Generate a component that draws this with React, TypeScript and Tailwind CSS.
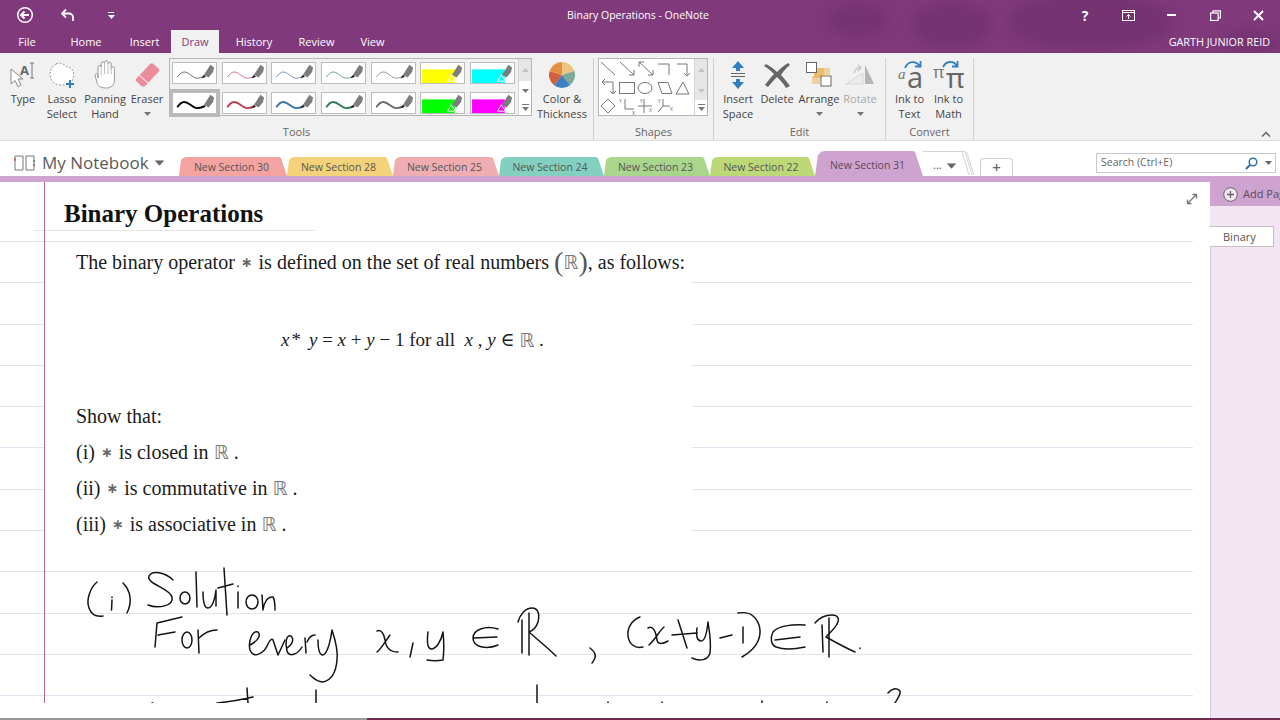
import React from "react";

const uiFont = "font-['Open_Sans','Noto_Sans',sans-serif]";
const serif = "font-['Liberation_Serif','DejaVu_Serif',serif]";

const sectionTabs = [
  { name: "New Section 30", color: "bg-[#f4a3a3]", w: "w-[108px]" },
  { name: "New Section 28", color: "bg-[#f3d27a]", w: "w-[106px]" },
  { name: "New Section 25", color: "bg-[#efadb1]", w: "w-[106px]" },
  { name: "New Section 24", color: "bg-[#84d0c0]", w: "w-[105px]" },
  { name: "New Section 23", color: "bg-[#a9d58c]", w: "w-[106px]" },
  { name: "New Section 22", color: "bg-[#bdd977]", w: "w-[105px]" },
];

const penColors = ["#2d2d2d", "#c23a50", "#3b70a8", "#2f7d52", "#6a6a6a"];
const markers = [
  ["#ffff00", "#00ffff"],
  ["#00ff00", "#ff00ff"],
];

function Caret({ className = "" }: { className?: string }) {
  return (
    <svg width="7" height="4" viewBox="0 0 7 4" className={className}>
      <path d="M0 0h7L3.5 4z" fill="currentColor" />
    </svg>
  );
}

function PenTip({ marker }: { marker?: string }) {
  return (
    <>
      <path d="M33 13l7-11 4 3-1 5-5 6z" fill="#7d7d7d" />
      {marker ? <path d="M28 20l4-7 5 7z" fill={marker} stroke="#fff" strokeWidth="1" /> : <path d="M30 17l3-4 2 2z" fill="#111" />}
    </>
  );
}

function Pen({ color, thick, selected }: { color: string; thick?: boolean; selected?: boolean }) {
  return (
    <div className={`h-[22px] w-[45px] border border-[#bdbdbd] bg-white ${selected ? "ring-[3px] ring-[#b9b9b9]" : ""}`}>
      <svg width="43" height="20" viewBox="0 0 45 22">
        <path
          d="M4 15C9 8 13 9 18 13S26 18 32 15"
          fill="none"
          stroke={color}
          strokeWidth={thick ? 2 : 1}
          strokeLinecap="round"
          opacity={thick ? 1 : 0.75}
        />
        <PenTip />
      </svg>
    </div>
  );
}

function Marker({ color }: { color: string }) {
  return (
    <div className="h-[22px] w-[45px] border border-[#bdbdbd] bg-white">
      <svg width="43" height="20" viewBox="0 0 45 22">
        <rect x="0" y="7" width="36" height="15" fill={color} />
        <PenTip marker={color} />
      </svg>
    </div>
  );
}

function GalleryScroll({ downDisabled }: { downDisabled?: boolean }) {
  return (
    <div className="flex w-[13px] flex-col border-l border-[#d5d5d5] text-[#777]">
      <div className="flex h-[22px] items-center justify-center bg-[#e6e6e6] text-[#c4c4c4]">
        <Caret className="rotate-180" />
      </div>
      <div className={`flex h-[19px] items-center justify-center ${downDisabled ? "bg-[#e6e6e6] text-[#c4c4c4]" : "bg-white"}`}>
        <Caret />
      </div>
      <div className="flex flex-1 flex-col items-center justify-center gap-[2px] bg-white">
        <div className="h-px w-[7px] bg-[#777]" />
        <Caret />
      </div>
    </div>
  );
}

function BigButton({
  w,
  icon,
  lines,
  caret,
  muted,
}: {
  w: string;
  icon: React.ReactNode;
  lines: string[];
  caret?: boolean;
  muted?: boolean;
}) {
  return (
    <div className={`${w} flex shrink-0 flex-col items-center ${muted ? "text-[#a8a8a8]" : "text-[#444]"}`}>
      <div className="flex h-[33px] items-center justify-center">{icon}</div>
      {lines.map((l) => (
        <div key={l} className="h-[15px] whitespace-nowrap text-[11px] leading-[15px]">
          {l}
        </div>
      ))}
      {caret && (
        <div className="flex h-[15px] items-center text-[#777]">
          <Caret />
        </div>
      )}
    </div>
  );
}

function Group({ w, label, children }: { w: string; label: string; children: React.ReactNode }) {
  return (
    <div className={`${w} flex h-[82px] shrink-0 flex-col border-r border-[#d0d0d0]`}>
      <div className="flex h-[66px] items-start">{children}</div>
      <div className="text-center text-[11px] leading-[15px] text-[#666]">{label}</div>
    </div>
  );
}

function Ink() {
  return (
    <svg
      className="absolute left-0 top-0"
      width="1193"
      height="521"
      viewBox="0 182 1193 521"
      fill="none"
      stroke="#141414"
      strokeWidth="1.5"
      strokeLinecap="round"
      strokeLinejoin="round"
    >
      {/* (i) Solution */}
      <path d="M97 582C90 588 86 600 89 608C91 614 96 617 103 616" />
      <path d="M112 600L111.500 610M112 597V597.500" />
      <path d="M123 583C130 590 133 601 127 613" />
      <path d="M173 580C165 572 152 570 149 576C146 584 170 588 172 597C174 606 158 609 148 605" />
      <ellipse cx="185" cy="598" rx="5" ry="6" />
      <path d="M196 572L197 607" />
      <path d="M203 592C203 602 204 608 208 608C212 608 215 600 216 590L216 606" />
      <path d="M224 568L227 615M218 588L233 584" />
      <path d="M238 592V608M238 586V586.500" />
      <ellipse cx="252" cy="602" rx="6" ry="7" />
      <path d="M262 595L263 610C264 602 268 596 273 597C275 600 275 606 275 610" />
      {/* For every x, y */}
      <path d="M157 623L155 647M157 623L182 617M158 635L175 632" />
      <ellipse cx="187" cy="640" rx="5" ry="8" />
      <path d="M198 630L199 653M199 638C204 633 210 630 217 630" />
      <path d="M250 645C256 642 262 636 258 632C252 630 248 642 250 650C253 659 264 654 268 644C270 640 272 638 273 640L278 655L285 640" />
      <path d="M287 648C291 646 295 640 291 636C286 634 285 644 287 651C289 658 298 654 302 647" />
      <path d="M305 638L306 653M307 642C309 637 312 635 315 635" />
      <path d="M318 640C318 648 319 654 322 655C326 656 330 645 332 630C336 642 338 652 337 660C336 672 332 680 323 682C318 682 314 679 310 675" />
      <path d="M377 631C382 629 384 635 385 640C386 648 390 652 398 652M390 635C386 640 382 648 377 652" />
      <path d="M413 643L410 657" />
      <path d="M428 632C427 640 427 648 431 649C436 649 441 642 443 632C444 642 444 652 443 660C438 661 432 661 427 660" />
      <path d="M498 629C485 625 473 630 473 638C473 647 486 650 498 645M474 638L497 637" />
      <path d="M522 620L522 653M529 613L529 655M518 622C520 614 526 608 532 608C538 608 540 614 538 622C536 628 532 631 529 632C538 640 548 648 556 656" />
      <path d="M590 648C594 651 596 655 595 658C594 660 593 662 592 663" />
      {/* (x+y-1) in R */}
      <path d="M640 617C632 620 627 628 628 636C629 644 635 649 643 647" />
      <path d="M648 628C653 625 656 632 657 640C658 645 663 644 668 641M664 627C660 630 655 640 649 645" />
      <path d="M678 620L687 648M672 635L697 633" />
      <path d="M697 628C696 636 697 641 701 641C705 641 707 632 708 622C710 634 711 646 710 653C708 660 700 662 692 658" />
      <path d="M720 638L732 635" />
      <path d="M743 627V643M738 613C745 612 750 613 753 616C760 622 762 632 758 641C755 648 749 653 742 657" />
      <path d="M805 625C792 624 778 626 773 632C770 638 771 645 776 647C784 650 796 649 805 647M775 640L800 637" />
      <path d="M822 625L823 652M829 618L829 657M815 623C820 617 826 615 832 615C838 615 840 619 837 624C834 630 828 634 826 637C835 642 846 648 855 652" />
      <path d="M860 648V648.500" />
      {/* next line, cut off at the bottom of the window */}
      <path d="M152 703H153M217 703C228 702 240 700 253 697M247 688L248 703M316 690V703M537 685V703" />
      <path d="M608 702V703M662 702V703M762 701V703M827 702V703M888 693C891 689 897 687 900 691C901 695 897 699 895 703" />
    </svg>
  );
}

function Star() {
  return <span className="mx-[6px] font-['DejaVu_Sans',serif] text-[14px] font-bold text-[#666]">∗</span>;
}

function Reals() {
  return <span className="font-['DejaVu_Sans',serif] text-[19px] text-[#777]">ℝ</span>;
}

export default function App() {
  return (
    <div className={`${uiFont} flex h-[720px] w-[1280px] flex-col overflow-hidden bg-white`}>
      {/* Title bar and tabs */}
      <div className="relative h-[53px] shrink-0 overflow-hidden bg-[#80397b] text-white">
        <svg className="absolute right-0 top-0" width="480" height="53" viewBox="0 0 480 53">
          <defs>
            <filter id="soft">
              <feGaussianBlur stdDeviation="6" />
            </filter>
          </defs>
          <g fill="#6d2f6c" filter="url(#soft)" opacity="0.6">
            <ellipse cx="58" cy="20" rx="30" ry="16" />
            <ellipse cx="152" cy="25" rx="40" ry="22" />
            <ellipse cx="290" cy="22" rx="82" ry="28" />
            <ellipse cx="450" cy="42" rx="30" ry="10" />
          </g>
        </svg>
        <div className="relative flex h-[30px] items-center">
          <div className="flex w-[50px] justify-center">
            <svg width="18" height="18" viewBox="0 0 18 18" fill="none" stroke="white" strokeWidth="1.500">
              <circle cx="9" cy="9" r="7.300" />
              <path d="M13 9H5.500M8.500 5.500L5 9l3.500 3.500" strokeWidth="2" />
            </svg>
          </div>
          <div className="ml-[8px] flex w-[20px] justify-center">
            <svg width="16" height="15" viewBox="0 0 16 15" fill="none" stroke="white" strokeWidth="1.800">
              <path d="M6 1.500L2 5.500l4 4M2.500 5.500H9a4 4 0 0 1 4 4V13" />
            </svg>
          </div>
          <div className="ml-[28px] flex w-[10px] flex-col items-center gap-[2px]">
            <div className="h-px w-[6px] bg-white" />
            <Caret className="text-white" />
          </div>
          <div className="ml-[447px] w-[150px] whitespace-nowrap pt-[2px] text-center text-[10.500px]">Binary Operations - OneNote</div>
          <div className="ml-[364px] flex w-[16px] justify-center text-[14px] font-bold">?</div>
          <div className="ml-[27px] flex w-[16px] justify-center">
            <svg width="13" height="11" viewBox="0 0 13 11" fill="none" stroke="white">
              <rect x="0.500" y="0.500" width="12" height="10" />
              <path d="M0.500 2.500H12.500M6.500 9V4.500M4.500 6.500l2-2 2 2" />
            </svg>
          </div>
          <div className="ml-[27px] flex w-[16px] justify-center">
            <div className="h-[2px] w-[9px] bg-white" />
          </div>
          <div className="ml-[28px] flex w-[16px] justify-center">
            <svg width="11" height="11" viewBox="0 0 11 11" fill="none" stroke="white" strokeWidth="1.200">
              <rect x="0.600" y="3" width="7.500" height="7.500" />
              <path d="M3 3V0.800H10.400V8H8" />
            </svg>
          </div>
          <div className="ml-[27px] flex w-[16px] justify-center">
            <svg width="11" height="11" viewBox="0 0 11 11" stroke="white" strokeWidth="2">
              <path d="M1 1l9 9M10 1l-9 9" />
            </svg>
          </div>
        </div>
        <div className="relative flex h-[23px] items-stretch text-[11px] leading-[23px]">
          <div className="w-[54px] text-center">File</div>
          <div className="w-[64px] text-center">Home</div>
          <div className="w-[53px] text-center">Insert</div>
          <div className="w-[48px] bg-[#f1f1f1] text-center text-[#80397b]">Draw</div>
          <div className="w-[70px] text-center">History</div>
          <div className="w-[55px] text-center">Review</div>
          <div className="w-[57px] text-center">View</div>
          <div className="ml-auto pr-[10px] text-[10.800px]">GARTH JUNIOR REID</div>
        </div>
      </div>

      {/* Ribbon */}
      <div className="flex h-[88px] shrink-0 items-start border-b border-[#dcdcdc] bg-[#f1f1f1] pt-[5px]">
        <Group w="w-[594px]" label="Tools">
          <div className="w-[4px] shrink-0" />
          <BigButton
            w="w-[38px]"
            lines={["Type"]}
            icon={
              <svg width="28" height="28" viewBox="0 0 28 28">
                <path d="M2 8v15l4-3.500 3 6 3-1.500-3-6h5z" fill="#fff" stroke="#888" />
                <text x="11" y="14" fontSize="13" fontWeight="700" fill="#666" fontFamily="Open Sans">A</text>
                <path d="M21 2h4M23 2v15M21 17h4" stroke="#777" fill="none" />
              </svg>
            }
          />
          <BigButton
            w="w-[40px]"
            lines={["Lasso", "Select"]}
            icon={
              <svg width="28" height="28" viewBox="0 0 28 28" fill="none">
                <path d="M8 3C14 0 17 5 20 6C26 7 27 14 24 20C20 25 10 25 6 22C0 17 1 7 8 3Z" fill="#fff" stroke="#999" strokeDasharray="2 1.500" />
                <path d="M22 19v8M18 23h8" stroke="#2f7fc1" strokeWidth="2" />
              </svg>
            }
          />
          <BigButton
            w="w-[46px]"
            lines={["Panning", "Hand"]}
            icon={
              <svg width="24" height="30" viewBox="0 0 24 30">
                <path
                  d="M5 18V7a1.600 1.600 0 0 1 3.200 0V3.500a1.700 1.700 0 0 1 3.400 0V2.500a1.700 1.700 0 0 1 3.400 0V4a1.600 1.600 0 0 1 3.200 0v4.500a1.600 1.600 0 0 1 3.200 0V20c0 5-3 8-8 8-6 0-9-2-9.500-6L2 15c0-2 3-1.500 3 1z"
                  fill="#fff"
                  stroke="#999"
                />
                <path d="M8.200 7v8M11.600 3.500V14M15 3v11M18.200 5v9" stroke="#bbb" fill="none" />
              </svg>
            }
          />
          <BigButton
            w="w-[38px]"
            lines={["Eraser"]}
            caret
            icon={
              <svg width="28" height="28" viewBox="0 0 28 28">
                <path d="M3 18L17 3c1-1 2.500-1 3.500 0l5 4.500c1 1 1 2.500 0 3.500L12 25c-1 1-2.500 1-3.500 0l-5-4.500c-1-.7-1-1.700-.5-2.500z" fill="#ea8c9a" />
                <path d="M6.500 14.500l9 8" stroke="#fff" strokeWidth="1" />
              </svg>
            }
          />
          <div className="ml-[3px] flex h-[58px] w-[363px] shrink-0 border border-[#b5b5b5]">
            <div className="grid w-[349px] grid-cols-[repeat(7,45px)] gap-x-[4.700px] gap-y-[7px] px-[2px] pt-[3px]">
              {penColors.map((c) => (
                <Pen key={c} color={c} />
              ))}
              <Marker color={markers[0][0]} />
              <Marker color={markers[0][1]} />
              {penColors.map((c, i) => (
                <Pen key={c} color={i === 0 ? "#000" : c} thick selected={i === 0} />
              ))}
              <Marker color={markers[1][0]} />
              <Marker color={markers[1][1]} />
            </div>
            <GalleryScroll />
          </div>
          <BigButton
            w="w-[60px]"
            lines={["Color &", "Thickness"]}
            icon={
              <svg width="28" height="28" viewBox="0 0 28 28">
                <path d="M14 14L14 1A13 13 0 0 1 26.400 10z" fill="#edc57f" />
                <path d="M14 14L26.400 10A13 13 0 0 1 22 24.300z" fill="#7ea997" />
                <path d="M14 14L22 24.300A13 13 0 0 1 6 24.300z" fill="#3f7fc1" />
                <path d="M14 14L6 24.300A13 13 0 0 1 1.600 10z" fill="#d2603d" />
                <path d="M14 14L1.600 10A13 13 0 0 1 14 1z" fill="#e58f45" />
              </svg>
            }
          />
        </Group>

        <Group w="w-[120px]" label="Shapes">
          <div className="ml-[4px] flex h-[58px] w-[110px] shrink-0 border border-[#b5b5b5] bg-white">
            <svg width="95" height="56" viewBox="0 0 95 56" fill="none" stroke="#777" className="shrink-0">
              <path d="M2 3L16 16" />
              <path d="M21 3L35 16M35 11V16H30" />
              <path d="M40 3L54 16M40 8V3H45M54 11V16H49" />
              <path d="M59 5H70V16" />
              <path d="M78 5H88V17M85 14L88 17L91 14" />
              <path d="M14 23H3M6 20L3 23L6 26M14 23V35M11 32L14 35L17 32" />
              <rect x="20.500" y="23.500" width="15" height="11" />
              <ellipse cx="46" cy="29" rx="7" ry="5.500" />
              <path d="M59 23.500H69L73 34.500H63Z" />
              <path d="M84 23L90 35H77Z" />
              <path d="M9 40L16 47L9 54L2 47Z" />
              <path d="M26 40V50H35" />
              <path d="M39 47H53M45 40V54" />
              <path d="M64 40V47L59 53M64 47H71" />
              <text x="20" y="44" fontSize="5" fill="#666" stroke="none">Y</text>
              <text x="33" y="56" fontSize="5" fill="#666" stroke="none">X</text>
              <text x="41" y="44" fontSize="5" fill="#666" stroke="none">Y</text>
              <text x="50" y="53" fontSize="5" fill="#666" stroke="none">X</text>
              <text x="59" y="44" fontSize="5" fill="#666" stroke="none">Y</text>
              <text x="71" y="52" fontSize="5" fill="#666" stroke="none">X</text>
            </svg>
            <GalleryScroll downDisabled />
          </div>
        </Group>

        <Group w="w-[172px]" label="Edit">
          <div className="w-[3px] shrink-0" />
          <BigButton
            w="w-[42px]"
            lines={["Insert", "Space"]}
            icon={
              <svg width="18" height="30" viewBox="0 0 18 30">
                <path d="M9 1l6 7h-4v3H7V8H3zM9 29l6-7h-4v-3H7v3H3z" fill="#2f7fc1" />
                <path d="M2 13.500H16M2 16.500H16" stroke="#666" />
              </svg>
            }
          />
          <BigButton
            w="w-[36px]"
            lines={["Delete"]}
            icon={
              <svg width="28" height="26" viewBox="0 0 28 26">
                <path d="M3 2c6 3 10 7 11 8 3-3 6-6 11-9l2 2c-5 4-7 7-9 10 3 3 6 7 9 11l-4 2c-3-5-6-8-9-11-3 3-6 6-9 10l-3-2c3-4 6-8 9-11C8 9 5 6 1 4z" fill="#666" />
              </svg>
            }
          />
          <BigButton
            w="w-[48px]"
            lines={["Arrange"]}
            caret
            icon={
              <svg width="28" height="28" viewBox="0 0 28 28">
                <rect x="9" y="7" width="10" height="10" fill="#edbd6b" />
                <rect x="1.500" y="1.500" width="10" height="10" fill="#fff" stroke="#666" />
                <rect x="16" y="15" width="10" height="10" fill="#fff" stroke="#666" />
                <rect x="17" y="7" width="8" height="8" fill="#edbd6b" opacity="0.6" />
                <rect x="7" y="15" width="8" height="8" fill="#edbd6b" opacity="0.6" />
              </svg>
            }
          />
          <BigButton
            w="w-[34px]"
            lines={["Rotate"]}
            caret
            muted
            icon={
              <svg width="30" height="24" viewBox="0 0 30 24" fill="none">
                <path d="M1 21L18 10V21Z" stroke="#d5d5d5" fill="#ececec" />
                <path d="M20 2L29 21H20Z" fill="#b5b5b5" />
                <path d="M9 10c1-4 4-6 7-5M13 2l3 3-3 3" stroke="#c8c8c8" strokeWidth="1.500" />
              </svg>
            }
          />
        </Group>

        <Group w="w-[88px]" label="Convert">
          <div className="w-[4px] shrink-0" />
          <BigButton
            w="w-[39px]"
            lines={["Ink to", "Text"]}
            icon={
              <svg width="34" height="33" viewBox="0 0 34 33" className="overflow-visible">
                <path d="M12 10C15 3 22 2 27 8M27.500 3V8.500H22" fill="none" stroke="#2f7fc1" strokeWidth="1.800" />
                <text x="5" y="21" fontSize="15" fontStyle="italic" fill="#777" fontFamily="Liberation Serif">a</text>
                <text x="14" y="30" fontSize="29" fill="#666" fontFamily="Open Sans">a</text>
              </svg>
            }
          />
          <BigButton
            w="w-[39px]"
            lines={["Ink to", "Math"]}
            icon={
              <svg width="34" height="33" viewBox="0 0 34 33" className="overflow-visible">
                <path d="M11 9C14 3 21 2 25 8M25.500 3V8.500H20" fill="none" stroke="#2f7fc1" strokeWidth="1.800" />
                <text x="1" y="20" fontSize="17" fill="#777" fontFamily="Noto Sans">π</text>
                <text x="14" y="30" fontSize="28" fill="#666" fontFamily="Noto Sans">π</text>
              </svg>
            }
          />
        </Group>
        <div className="flex h-[82px] flex-1 items-end justify-end pb-[3px] pr-[9px]">
          <svg width="10" height="6" viewBox="0 0 10 6" fill="none" stroke="#666" strokeWidth="1.500">
            <path d="M1 5.500L5 1.500l4 4" />
          </svg>
        </div>
      </div>

      {/* Notebook and section tabs */}
      <div className="flex h-[35px] shrink-0 items-end bg-white">
        <div className="flex h-[35px] w-[179px] shrink-0 items-center pl-[14px] pt-[8px] text-[#5a5a5a]">
          <svg width="21" height="18" viewBox="0 0 21 18" fill="none" stroke="#777" className="shrink-0">
            <path d="M1 2H9V16H1ZM12 2H20V16H12Z" />
            <path d="M1 4V7" stroke="#d0583a" strokeWidth="1.500" />
            <path d="M20 6V8M20 10V12" stroke="#444" />
          </svg>
          <span className="ml-[7px] whitespace-nowrap text-[17px] leading-none">My Notebook</span>
          <Caret className="ml-[7px] scale-[1.400] text-[#666]" />
        </div>
        {sectionTabs.map((t) => (
          <div
            key={t.name}
            className={`${t.w} ${t.color} h-[19px] shrink-0 pr-[3px] text-center text-[10.500px] leading-[20px] text-[#555] [clip-path:polygon(0_100%,2px_3px,4px_1px,7px_0,calc(100%-8px)_0,calc(100%-6px)_1px,100%_100%)]`}
          >
            {t.name}
          </div>
        ))}
        <div className="h-[25px] w-[108px] shrink-0 pr-[3px] bg-[#cfa3d0] text-center text-[10.500px] leading-[29px] text-[#5a4a5a] [clip-path:polygon(0_100%,3px_4px,6px_1px,9px_0,calc(100%-10px)_0,calc(100%-8px)_1px,100%_100%)]">
          New Section 31
        </div>
        <div className="relative flex h-[25px] w-[57px] shrink-0 items-end gap-[6px] pb-[6px] pl-[10px] text-[11px] leading-none text-[#555]">
          <svg className="absolute left-[-8px] top-0" width="65" height="25" viewBox="0 0 65 25" fill="none" stroke="#d4d4d4">
            <path d="M8 0.500H47L54 24M47 0.500H50L57 24M50 1.500H52L59 24" />
          </svg>
          <span>...</span>
          <Caret className="mb-[2px] scale-[1.400] text-[#666]" />
        </div>
        <div className="flex h-[18px] w-[33px] shrink-0 items-center justify-center rounded-t-[4px] border-x border-t border-[#cfcfcf] text-[15px] font-semibold leading-none text-[#666]">
          +
        </div>
        <div className="mb-[3px] ml-[83px] flex h-[20px] w-[180px] shrink-0 items-center border border-[#c9c9c9] pl-[4px] text-[10.500px] text-[#666]">
          <span>Search (Ctrl+E)</span>
          <svg width="13" height="13" viewBox="0 0 13 13" fill="none" stroke="#2f6fa8" strokeWidth="1.500" className="ml-auto">
            <circle cx="8" cy="5" r="3.800" />
            <path d="M5 8L1 12" strokeWidth="2" />
          </svg>
          <Caret className="ml-[7px] mr-[3px] text-[#666]" />
        </div>
      </div>

      <div className="h-[6px] shrink-0 bg-[#cfa3d0]" />

      {/* Page + page list */}
      <div className="flex min-h-0 flex-1">
        <div className="relative w-[1210px] shrink-0 overflow-hidden bg-white">
          <div className="h-[59px] pl-[64px]">
            <div className={`${serif} pt-[17px] text-[25px] font-bold leading-[30px] text-[#111]`}>Binary Operations</div>
            <div className="-ml-[30px] mt-[1px] h-px w-[281px] bg-[#e6e6e6]" />
          </div>
          <div className="h-[462px] w-[1193px] bg-[repeating-linear-gradient(to_bottom,#dde6ee_0,#dde6ee_1px,transparent_1px,transparent_41.300px)] pt-[2px]">
            <div className={`${serif} ml-[45px] h-[302px] w-[647px] bg-white pl-[31px] pt-[1px] text-[20px] leading-[26px] text-[#1c1c1c]`}>
              <div className="flex h-[36px] items-center whitespace-nowrap">
                The binary operator
                <Star />
                is defined on the set of real numbers&nbsp;
                <span className="text-[28px] font-light leading-none text-[#555]">(</span>
                <Reals />
                <span className="text-[28px] font-light leading-none text-[#555]">)</span>, as follows:
              </div>
              <div className="mt-[42px] flex h-[36px] items-center whitespace-nowrap pl-[205px] text-[19px]">
                <i>x</i>
                <span className="ml-[2px] mr-[8px]">*</span>
                <i>y</i>&nbsp;=&nbsp;<i>x</i>&nbsp;+&nbsp;<i>y</i>&nbsp;−&nbsp;1&nbsp;for all&nbsp;&nbsp;<i>x</i>&nbsp;,&nbsp;<i>y</i>&nbsp;∈&nbsp;
                <Reals />
                &nbsp;.
              </div>
              <div className="mt-[40px] h-[36px] leading-[36px]">Show that:</div>
              <div className="flex h-[36px] items-center">
                (i)
                <Star />
                is closed in&nbsp;
                <Reals />
                &nbsp;.
              </div>
              <div className="flex h-[36px] items-center">
                (ii)
                <Star />
                is commutative in&nbsp;
                <Reals />
                &nbsp;.
              </div>
              <div className="flex h-[36px] items-center">
                (iii)
                <Star />
                is associative in&nbsp;
                <Reals />
                &nbsp;.
              </div>
            </div>
          </div>
          <div className="absolute left-[44px] top-0 h-[521px] w-px bg-[#b06a7c]" />
          <Ink />
          <div className="absolute right-[12px] top-[11px] text-[#777]">
            <svg width="12" height="12" viewBox="0 0 12 12" fill="none" stroke="#777" strokeWidth="1.300">
              <path d="M2 10L10 2M6.500 1.500H10.500V5.500M1.500 6.500V10.500H5.500" />
            </svg>
          </div>
        </div>
        <div className="flex w-[70px] shrink-0 flex-col bg-[#f3e6f3]">
          <div className="flex h-[24px] shrink-0 items-center whitespace-nowrap bg-[#cfa3d0] pl-[13px] text-[11px] text-[#5a4a5a]">
            <svg width="15" height="15" viewBox="0 0 15 15" fill="none" stroke="#666" className="mr-[5px] shrink-0">
              <circle cx="7.500" cy="7.500" r="6.800" fill="#f3e6f3" />
              <path d="M7.500 4V11M4 7.500H11" strokeWidth="1.300" />
            </svg>
            Add Page
          </div>
          <div className="mt-[20px] h-[21px] w-[64px] border-y border-r border-[#c9bcc9] bg-white pl-[13px] text-[11px] leading-[19px] text-[#555]">
            Binary
          </div>
          <div className="flex-1 border-l border-[#d8c9d8]" />
        </div>
      </div>

      <div className="flex h-[2px] shrink-0">
        <div className="w-[367px] bg-[#9a9a9a]" />
        <div className="flex-1 bg-[#6f2b50]" />
      </div>
    </div>
  );
}
